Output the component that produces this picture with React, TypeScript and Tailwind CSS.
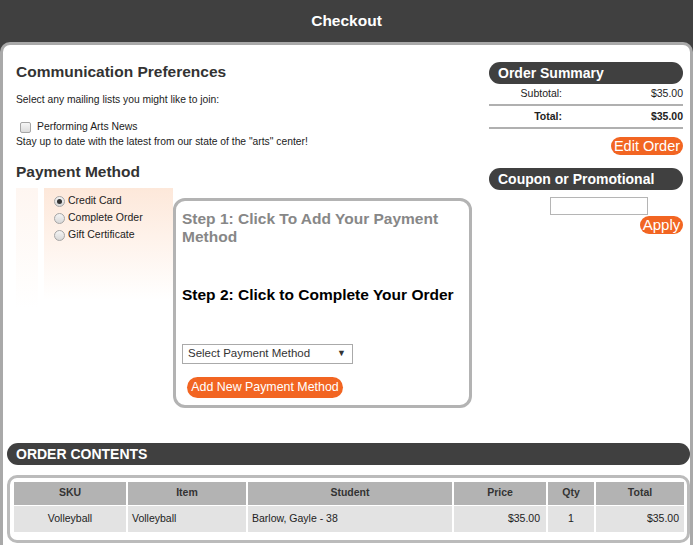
import React from 'react';

const orange = 'bg-[#f26522]';

function Pill({ children, className = '' }: { children: React.ReactNode; className?: string }) {
  return (
    <div className={`h-[22px] rounded-full bg-[#404040] text-white font-bold text-[14px] leading-[22px] pl-[9px] ${className}`}>
      {children}
    </div>
  );
}

function Radio({ checked = false, label }: { checked?: boolean; label: string }) {
  return (
    <div className="flex items-center h-[17px]">
      <span className="w-[11px] h-[11px] rounded-full border border-[#a5a5a5] bg-gradient-to-b from-[#f4f4f4] to-[#d8d8d8] flex items-center justify-center mt-[2px]">
        {checked && <span className="w-[5px] h-[5px] rounded-full bg-[#333]" />}
      </span>
      <span className="ml-[3px] text-[10.5px] text-[#222]">{label}</span>
    </div>
  );
}

export default function App() {
  const columns = [
    { name: 'SKU', w: 'w-[113px]' },
    { name: 'Item', w: 'w-[120px]' },
    { name: 'Student', w: 'w-[206px]' },
    { name: 'Price', w: 'w-[94px]' },
    { name: 'Qty', w: 'w-[48px]' },
    { name: 'Total', w: 'w-[89px]' },
  ];

  return (
    <div className="min-h-[545px] bg-[#404040] font-['Liberation_Sans',Arial,sans-serif] text-[#222] overflow-hidden">
      <div className="h-[42px] flex items-center justify-center text-white font-bold text-[15.5px]">Checkout</div>

      <div className="bg-white border-[3px] border-b-0 border-[#a9a9a9] rounded-t-[10px] min-h-[503px]">
        <div className="flex">
          {/* left column */}
          <div className="w-[470px] pl-[13px] pt-[17px]">
            <h2 className="text-[15.5px] leading-[20px] font-bold text-[#333]">Communication Preferences</h2>
            <p className="mt-[11px] text-[10.3px] leading-[14px]">Select any mailing lists you might like to join:</p>
            <div className="mt-[13px] flex items-center h-[14px] pl-[4px]">
              <span className="w-[11px] h-[11px] rounded-[2px] border border-[#a5a5a5] bg-gradient-to-b from-[#f6f6f6] to-[#dcdcdc]" />
              <span className="ml-[6px] text-[10.4px]">Performing Arts News</span>
            </div>
            <p className="mt-[1px] text-[10.3px] leading-[14px]">Stay up to date with the latest from our state of the "arts" center!</p>
            <h2 className="mt-[13px] text-[15.5px] leading-[20px] font-bold text-[#333]">Payment Method</h2>

            <div className="flex items-start mt-[6px]">
              <div className="w-[22px] h-[120px] bg-gradient-to-b from-[#fef6f1] to-white" />
              <div className="ml-[6px] w-[129px] h-[112px] bg-gradient-to-b from-[#fde8da] to-white pt-[4px] pl-[10px]">
                <Radio checked label="Credit Card" />
                <Radio label="Complete Order" />
                <Radio label="Gift Certificate" />
              </div>
              <div className="mt-[10px] w-[299px] h-[210px] border-[3px] border-[#b3b3b3] rounded-[12px] pl-[6px] pt-[9px]">
                <div className="text-[15.5px] leading-[18px] font-bold text-[#878787]">
                  Step 1: Click To Add Your Payment
                  <br />
                  Method
                </div>
                <div className="mt-[40px] text-[15.5px] leading-[18px] font-bold text-black">Step 2: Click to Complete Your Order</div>
                <div className="mt-[40px] w-[171px] h-[20px] border border-[#aaa] flex items-center justify-between pl-[5px] pr-[6px] text-[11.5px] text-[#333]">
                  <span>Select Payment Method</span>
                  <span className="text-[9px]">▼</span>
                </div>
                <button className={`mt-[13px] ml-[5px] w-[156px] h-[21px] rounded-full ${orange} text-white text-[12.4px] leading-[21px]`}>
                  Add New Payment Method
                </button>
              </div>
            </div>
          </div>

          {/* right column */}
          <div className="ml-[16px] w-[194px] pt-[17px]">
            <Pill>Order Summary</Pill>
            <div className="flex h-[20px] items-center text-[10.5px]">
              <span className="w-[73px] text-right">Subtotal:</span>
              <span className="flex-1 text-right">$35.00</span>
            </div>
            <div className="h-[2px] bg-[#b0b0b0]" />
            <div className="flex h-[21px] items-center text-[10.5px] font-bold">
              <span className="w-[73px] text-right">Total:</span>
              <span className="flex-1 text-right">$35.00</span>
            </div>
            <div className="h-[2px] bg-[#b0b0b0]" />
            <div className="flex justify-end mt-[8px]">
              <button className={`h-[18px] w-[72px] rounded-full ${orange} text-white text-[14.5px] leading-[18px]`}>Edit Order</button>
            </div>
            <Pill className="mt-[13px]">Coupon or Promotional</Pill>
            <div className="mt-[7px] ml-[61px] w-[98px] h-[18px] border border-[#b5b5b5]" />
            <div className="flex justify-end mt-[1px]">
              <button className={`h-[18px] w-[43px] rounded-full ${orange} text-white text-[15px] leading-[18px]`}>Apply</button>
            </div>
          </div>
        </div>

        {/* order contents */}
        <Pill className="mt-[35px] ml-[4px] pl-[9px]">ORDER CONTENTS</Pill>
        <div className="mt-[10px] ml-[4px] border-[3px] border-[#bbb] rounded-[10px] pt-[4px] pl-[4px] pr-[3px] pb-[8px]">
          <table className="border-collapse">
            <thead>
              <tr className="bg-[#b3b3b3] h-[23px]">
                {columns.map((c, i) => (
                  <th
                    key={c.name}
                    className={`${c.w} text-[10.5px] font-bold text-[#333] text-center border-b border-white ${i < columns.length - 1 ? 'border-r-2' : ''}`}
                  >
                    {c.name}
                  </th>
                ))}
              </tr>
            </thead>
            <tbody>
              <tr className="bg-[#e3e3e3] h-[27px] text-[10.5px] text-[#222]">
                <td className="text-center border-r-2 border-white">Volleyball</td>
                <td className="pl-[4px] border-r-2 border-white">Volleyball</td>
                <td className="pl-[4px] border-r-2 border-white">Barlow, Gayle - 38</td>
                <td className="text-right pr-[6px] border-r-2 border-white">$35.00</td>
                <td className="text-center border-r-2 border-white">1</td>
                <td className="text-right pr-[5px]">$35.00</td>
              </tr>
            </tbody>
          </table>
        </div>
      </div>
    </div>
  );
}
